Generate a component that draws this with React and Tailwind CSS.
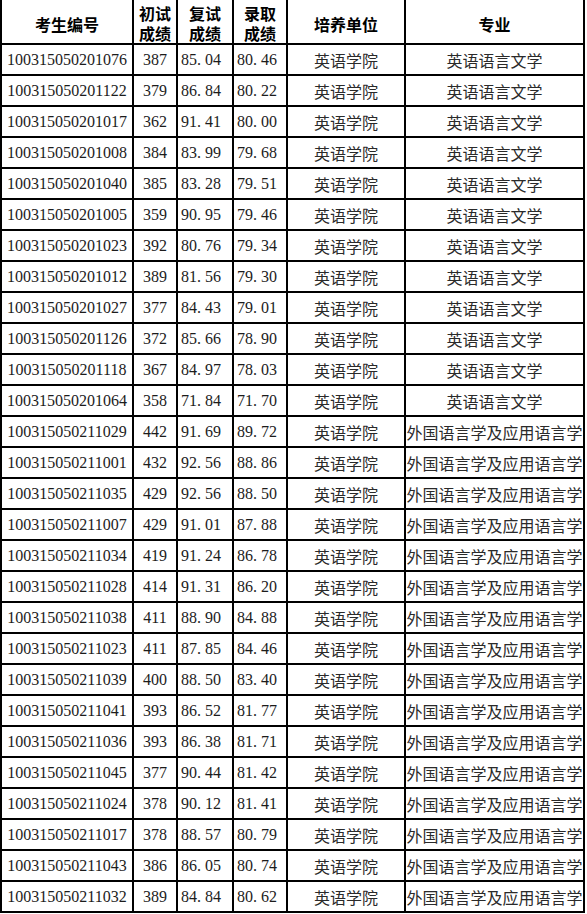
const rows = [
  ["100315050201076", "387", "85.04", "80.46", "英语语言文学"],
  ["100315050201122", "379", "86.84", "80.22", "英语语言文学"],
  ["100315050201017", "362", "91.41", "80.00", "英语语言文学"],
  ["100315050201008", "384", "83.99", "79.68", "英语语言文学"],
  ["100315050201040", "385", "83.28", "79.51", "英语语言文学"],
  ["100315050201005", "359", "90.95", "79.46", "英语语言文学"],
  ["100315050201023", "392", "80.76", "79.34", "英语语言文学"],
  ["100315050201012", "389", "81.56", "79.30", "英语语言文学"],
  ["100315050201027", "377", "84.43", "79.01", "英语语言文学"],
  ["100315050201126", "372", "85.66", "78.90", "英语语言文学"],
  ["100315050201118", "367", "84.97", "78.03", "英语语言文学"],
  ["100315050201064", "358", "71.84", "71.70", "英语语言文学"],
  ["100315050211029", "442", "91.69", "89.72", "外国语言学及应用语言学"],
  ["100315050211001", "432", "92.56", "88.86", "外国语言学及应用语言学"],
  ["100315050211035", "429", "92.56", "88.50", "外国语言学及应用语言学"],
  ["100315050211007", "429", "91.01", "87.88", "外国语言学及应用语言学"],
  ["100315050211034", "419", "91.24", "86.78", "外国语言学及应用语言学"],
  ["100315050211028", "414", "91.31", "86.20", "外国语言学及应用语言学"],
  ["100315050211038", "411", "88.90", "84.88", "外国语言学及应用语言学"],
  ["100315050211023", "411", "87.85", "84.46", "外国语言学及应用语言学"],
  ["100315050211039", "400", "88.50", "83.40", "外国语言学及应用语言学"],
  ["100315050211041", "393", "86.52", "81.77", "外国语言学及应用语言学"],
  ["100315050211036", "393", "86.38", "81.71", "外国语言学及应用语言学"],
  ["100315050211045", "377", "90.44", "81.42", "外国语言学及应用语言学"],
  ["100315050211024", "378", "90.12", "81.41", "外国语言学及应用语言学"],
  ["100315050211017", "378", "88.57", "80.79", "外国语言学及应用语言学"],
  ["100315050211043", "386", "86.05", "80.74", "外国语言学及应用语言学"],
  ["100315050211032", "389", "84.84", "80.62", "外国语言学及应用语言学"],
];

const num = "font-['Liberation_Serif','Noto_Sans_CJK_SC',serif] text-[16px] text-[#1c1c1c]";
const cjk = "font-['Noto_Sans_CJK_SC',sans-serif] text-[16px] text-[#2a2a2a]";
const head = "font-['Noto_Sans_CJK_SC',sans-serif] text-[16px] font-bold text-black leading-[20px]";

// SimSun-style decimal: the dot takes a full half-width cell
const Score = ({ value }) => {
  const [a, b] = value.split(".");
  return (
    <span className="whitespace-nowrap">
      {a}
      <span className="inline-block w-2 text-left">.</span>
      {b}
    </span>
  );
};

const TwoLine = ({ top }) => (
  <div className={`bg-white h-[43px] flex items-center justify-center pt-[2px] ${head}`}>
    <span className="block text-center">
      {top}
      <br />
      成绩
    </span>
  </div>
);

const App = () => {
  return (
    <div className="bg-white min-h-screen">
      <div className="w-[585px] bg-black px-[2px] pb-[2px] grid grid-cols-[130px_42px_54px_52px_116px_177px] gap-[2px]">
        {/* header */}
        <div className={`bg-white h-[43px] flex items-center justify-center pt-[4px] ${head}`}>考生编号</div>
        <TwoLine top="初试" />
        <TwoLine top="复试" />
        <TwoLine top="录取" />
        <div className={`bg-white h-[43px] flex items-center justify-center pt-[4px] ${head}`}>培养单位</div>
        <div className={`bg-white h-[43px] flex items-center justify-center pt-[4px] ${head}`}>专业</div>

        {/* rows */}
        {rows.map((r) => (
          <div key={r[0]} className="contents">
            <div className={`bg-white h-[29px] flex items-center justify-center ${num}`}>{r[0]}</div>
            <div className={`bg-white h-[29px] flex items-center justify-center ${num}`}>{r[1]}</div>
            <div className={`bg-white h-[29px] flex items-center pl-[3px] ${num}`}>
              <Score value={r[2]} />
            </div>
            <div className={`bg-white h-[29px] flex items-center pl-[3px] ${num}`}>
              <Score value={r[3]} />
            </div>
            <div className={`bg-white h-[29px] flex items-center justify-center ${cjk}`}>英语学院</div>
            <div className={`bg-white h-[29px] flex items-center justify-center whitespace-nowrap overflow-hidden ${cjk}`}>{r[4]}</div>
          </div>
        ))}
      </div>
    </div>
  );
};

export default App;
